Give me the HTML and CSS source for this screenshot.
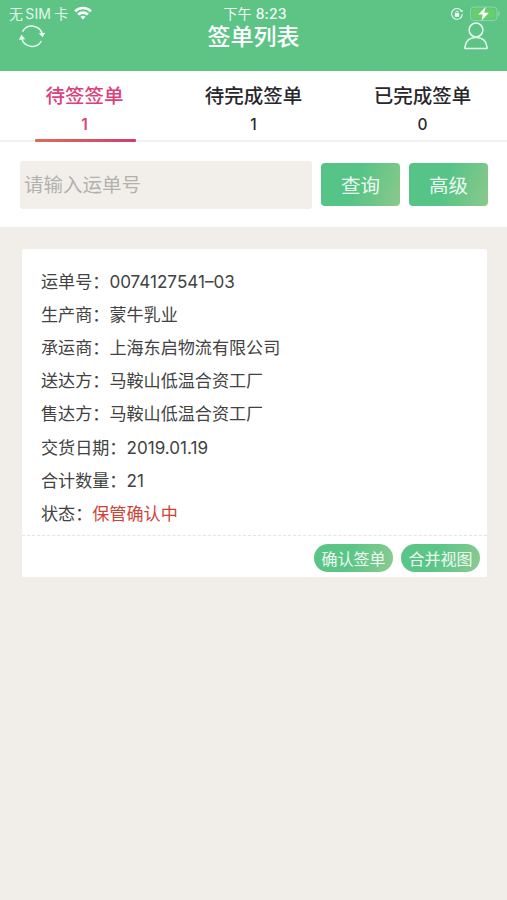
FILE: index.html
```html
<!DOCTYPE html>
<html lang="zh-CN">
<head>
<meta charset="utf-8">
<meta name="viewport" content="width=device-width, initial-scale=1">
<title>签单列表</title>
<link rel="stylesheet" href="styles.css">
</head>
<body>
<header class="header">
  <div class="status">
    <div class="status-left">
      <span class="carrier">无<b>SIM</b>卡</span>
      <svg class="wifi" width="18" height="14" viewBox="0 0 18 14" fill="none" stroke="#fff" stroke-width="2.6"><path d="M1.1 5.3C5.5.9 12.5.9 16.9 5.3M4.1 8.6c2.7-2.7 7.1-2.7 9.8 0"/><path d="M9 13.5l-2.5-2.7c1.4-1.3 3.6-1.3 5 0z" fill="#fff" stroke="none"/></svg>
    </div>
    <span class="time">下午 <b>8:23</b></span>
    <div class="status-right">
      <svg width="12" height="12" viewBox="0 0 12 12" fill="none" stroke="#e8f8ef"><path d="M10.7 3.2A5.4 5.4 0 1 0 11.4 6" stroke-width="1.1"/><path d="M9 3.2l2.4 1.1.3-2.6z" fill="#e8f8ef" stroke="none"/><rect x="3.8" y="5.3" width="4.4" height="3.4" rx=".5" fill="#fff" stroke="none"/><path d="M4.7 5.5V4.4a1.3 1.3 0 0 1 2.6 0v1.1" stroke-width=".9"/></svg>
      <svg width="31" height="16" viewBox="0 0 31 16"><rect x=".5" y="1" width="26.5" height="13.5" rx="3.5" fill="none" stroke="#8ed6aa"/><rect x="2.3" y="2.8" width="22.9" height="9.9" rx="2" fill="#66cf6c"/><path d="M28.3 5.2c2 .8 2 4.3 0 5.1z" fill="#8ed6aa"/><path d="M15.8.8L8.3 8.600h4.400l-1.200 6.200 7.300-8h-4.500z" fill="#fff"/></svg>
    </div>
  </div>
  <div class="nav">
    <svg class="refresh" width="28" height="25" viewBox="0 0 28 25" fill="none" stroke="#eefbf3" stroke-width="1.5"><path d="M4.600 7.600A10.700 10.700 0 0 1 24.300 10.200M23.400 17A10.700 10.700 0 0 1 3.700 14.400"/><path d="M20.800 9.200l6.400-.5-2.700 4.600zM7.200 15.200L.8 15.700l2.800-4.900z" fill="#eefbf3" stroke="none"/></svg>
    <h1>签单列表</h1>
    <svg class="user" width="24" height="28" viewBox="0 0 24 28" fill="none" stroke="#e8f9ef" stroke-width="1.5" stroke-linejoin="round"><circle cx="12" cy="8" r="6.900"/><path d="M1 26.500v-1.600C1.700 18.700 6 15.500 12 15.500s10.300 3.200 11 9.400v1.600z"/></svg>
  </div>
</header>
<nav class="tabs">
  <a class="tab active"><span>待签签单</span><em>1</em></a>
  <a class="tab"><span>待完成签单</span><em>1</em></a>
  <a class="tab"><span>已完成签单</span><em>0</em></a>
</nav>
<section class="search">
  <input class="field" type="text" placeholder="请输入运单号">
  <button class="btn">查询</button>
  <button class="btn">高级</button>
</section>
<article class="card">
  <ul class="details">
    <li>运单号：<span>0074127541–03</span></li>
    <li>生产商：<span>蒙牛乳业</span></li>
    <li>承运商：<span>上海东启物流有限公司</span></li>
    <li>送达方：<span>马鞍山低温合资工厂</span></li>
    <li>售达方：<span>马鞍山低温合资工厂</span></li>
    <li>交货日期：<span>2019.01.19</span></li>
    <li>合计数量：<span>21</span></li>
    <li>状态：<span class="state">保管确认中</span></li>
  </ul>
  <footer class="actions">
    <button class="pill">确认签单</button>
    <button class="pill">合并视图</button>
  </footer>
</article>
</body>
</html>
```

FILE: styles.css
```css
* { box-sizing: border-box; }
body {
  margin: 0;
  min-height: 900px;
  background: #f1eee9;
  color: #424242;
  font-family: Inter, "Noto Sans CJK SC", sans-serif;
}
button, input { font-family: inherit; border: 0; margin: 0; padding: 0; }
svg { display: block; flex: none; }

.header { height: 71px; background: #5dc486; color: #fff; }
.status {
  display: grid;
  grid-template-columns: 1fr auto 1fr;
  height: 22px;
  padding: 6px 6px 0 9px;
  font-size: 14px;
  line-height: 16px;
}
.status b { font-weight: 500; }
.status-left, .status-right { display: flex; align-items: flex-start; }
.carrier { color: #e3f6ea; letter-spacing: .2px; white-space: nowrap; }
.carrier b { margin: 0 3px 0 2px; font-weight: 400; }
.wifi { margin-left: 6px; }
.time { color: #f2fbf5; letter-spacing: .1px; white-space: nowrap; }
.status-right { justify-content: flex-end; gap: 7px; }
.status-right svg:first-child { margin-top: 2px; }
.nav {
  display: grid;
  grid-template-columns: 1fr auto 1fr;
  padding: 0 19px 0 18px;
}
.refresh { margin-top: 2px; }
.user { justify-self: end; }
h1 { margin: 1px 0 0 1px; font-size: 23px; line-height: 28px; font-weight: 500; }

.tabs { display: flex; height: 71px; background: #fff; border-bottom: 2px solid #f1f1f1; }
.tab {
  flex: 1;
  display: flex;
  flex-direction: column;
  align-items: center;
  height: 71px;
  padding-top: 11px;
  color: #28282c;
  font-weight: 500;
}
.tab span { font-size: 19.5px; line-height: 28px; }
.tab em { font-style: normal; font-size: 15.5px; line-height: 20px; margin-top: 5px; }
.active { color: #dc4179; }
.active em { font-weight: 600; }
.active::after {
  content: "";
  width: 101px;
  height: 3px;
  margin: 4px 0 0 1px;
  border-radius: 1px;
  background: linear-gradient(90deg, #dc6c5b, #d23d6d);
}

.search {
  display: flex;
  align-items: center;
  gap: 9px;
  height: 85px;
  padding: 0 19px 0 20px;
  background: #fff;
}
.field {
  flex: 1;
  min-width: 0;
  height: 48px;
  padding-left: 4px;
  border-radius: 3px;
  background: #f2efeb;
  font-size: 19.5px;
}
.field::placeholder { color: #b3b1ad; opacity: 1; }
.btn {
  width: 79px;
  height: 43px;
  padding-bottom: 1px;
  border-radius: 4px;
  background: linear-gradient(110deg, #55c486 45%, #8bc98b);
  color: #edfaf1;
  font-size: 19.5px;
}

.card {
  margin: 22px 20px 0 22px;
  height: 328px;
  background: #fff;
  border-radius: 2px;
}
.details {
  height: 287px;
  margin: 0;
  padding: 15.600px 19px 0;
  list-style: none;
  border-bottom: 1px dashed #e4e4e4;
  font-size: 17.1px;
}
.details li { height: 33.2px; line-height: 33.2px; white-space: nowrap; }
.state { color: #cf4337; }
.actions { display: flex; justify-content: flex-end; gap: 8px; padding: 8px 7px 0; }
.pill {
  width: 79px;
  height: 28px;
  padding-bottom: 1px;
  border-radius: 14px;
  background: linear-gradient(110deg, #5bc588 45%, #8bcb90);
  color: #effaf2;
  font-size: 16px;
}
```
